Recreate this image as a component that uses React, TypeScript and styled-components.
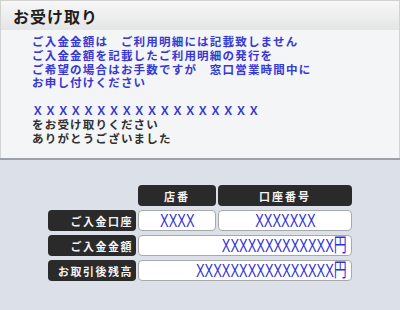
import styled, { createGlobalStyle } from "styled-components";

const GlobalStyle = createGlobalStyle`
  html, body {
    margin: 0;
    padding: 0;
    background: #dce1e9;
  }
  body {
    font-family: "Noto Sans CJK JP", "Noto Sans", sans-serif;
  }
`;

const messageLines = [
  "ご入金金額は　ご利用明細には記載致しません",
  "ご入金金額を記載したご利用明細の発行を",
  "ご希望の場合はお手数ですが　窓口営業時間中に",
  "お申し付けください",
];

const noticeLines = ["をお受け取りください", "ありがとうございました"];

export default function App() {
  return (
    <>
      <GlobalStyle />
      <Screen>
        <TopPanel>
          <Header>
            <Title>お受け取り</Title>
          </Header>
          <Message>
            {messageLines.map((line) => (
              <Line key={line} $tone="blue">{line}</Line>
            ))}
            <Line $tone="blue">&nbsp;</Line>
            <Line $tone="blue">{"Ｘ".repeat(18)}</Line>
            {noticeLines.map((line) => (
              <Line key={line} $tone="dark">{line}</Line>
            ))}
          </Message>
        </TopPanel>
        <Divider />
        <BottomPanel>
          <Table>
            <span />
            <HeadCell>店番</HeadCell>
            <HeadCell>口座番号</HeadCell>

            <LabelCell>ご入金口座</LabelCell>
            <ValueCell $align="center">
              <Value $origin="center">XXXX</Value>
            </ValueCell>
            <ValueCell $align="center">
              <Value $origin="center">XXXXXXX</Value>
            </ValueCell>

            <LabelCell>ご入金金額</LabelCell>
            <ValueCell $align="right" $span={2}>
              <Value $origin="right">XXXXXXXXXXXXX円</Value>
            </ValueCell>

            <LabelCell>お取引後残高</LabelCell>
            <ValueCell $align="right" $span={2}>
              <Value $origin="right">XXXXXXXXXXXXXXXX円</Value>
            </ValueCell>
          </Table>
        </BottomPanel>
      </Screen>
    </>
  );
}

const Screen = styled.div`
  width: 400px;
  height: 310px;
  display: flex;
  flex-direction: column;
  overflow: hidden;
`;

const TopPanel = styled.div`
  border: 1px solid #d2d2d2;
  border-bottom: none;
  display: flex;
  flex-direction: column;
`;

const Header = styled.div`
  height: 29px;
  background: linear-gradient(#f7f7f7, #e4e5e5);
  display: flex;
  align-items: center;
  padding-left: 12px;
`;

const Title = styled.h1`
  margin: 0;
  font-size: 16px;
  font-weight: bold;
  letter-spacing: 1px;
  color: #1e1e1e;
`;

const Message = styled.div`
  height: 123px;
  background: #f4f5f7;
  padding: 5px 0 0 31px;
`;

const Line = styled.div<{ $tone: "blue" | "dark" }>`
  font-size: 11.5px;
  font-weight: bold;
  line-height: 13.8px;
  letter-spacing: 1.2px;
  white-space: nowrap;
  color: ${({ $tone }) => ($tone === "blue" ? "#3838d2" : "#303030")};
`;

const Divider = styled.div`
  height: 2px;
  background: #9ca1a7;
`;

const BottomPanel = styled.div`
  flex: 1;
  background: #dce1e9;
  padding: 25px 0 0 48px;
`;

const Table = styled.div`
  display: grid;
  grid-template-columns: 88px 78px 134px;
  grid-auto-rows: 21px;
  column-gap: 2px;
  row-gap: 4px;
`;

const DarkCell = styled.div`
  background: #2a2a2a;
  border-radius: 4px;
  color: #f4f4f4;
  font-size: 11px;
  font-weight: bold;
  display: flex;
  align-items: center;
`;

const HeadCell = styled(DarkCell)`
  justify-content: center;
  letter-spacing: 2px;
`;

const LabelCell = styled(DarkCell)`
  justify-content: flex-end;
  padding-right: 3px;
  letter-spacing: 1.5px;
`;

const ValueCell = styled.div<{ $align: "center" | "right"; $span?: number }>`
  grid-column: span ${({ $span }) => $span ?? 1};
  background: #ffffff;
  border: 1.5px solid #a9a9a9;
  border-radius: 4px;
  display: flex;
  align-items: center;
  justify-content: ${({ $align }) => ($align === "center" ? "center" : "flex-end")};
  padding-right: ${({ $align }) => ($align === "right" ? "4px" : "0")};
  overflow: hidden;
`;

const Value = styled.span<{ $origin: "center" | "right" }>`
  display: inline-block;
  font-family: "Liberation Sans", "Noto Sans CJK JP", sans-serif;
  font-size: 19px;
  line-height: 19px;
  color: #3030d8;
  white-space: nowrap;
  transform: scaleX(0.68);
  transform-origin: ${({ $origin }) => $origin} center;
`;
